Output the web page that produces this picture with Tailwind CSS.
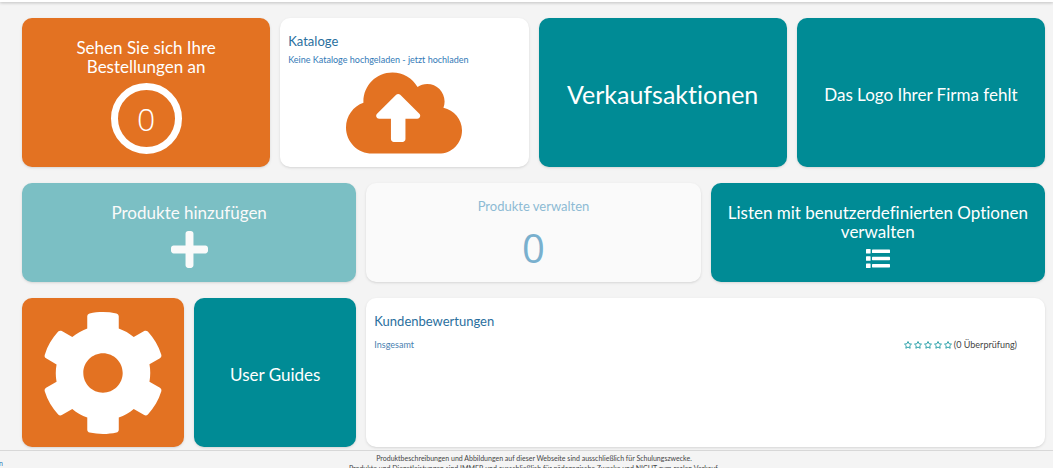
<!DOCTYPE html>
<html lang="de">
<head>
    <meta charset="utf-8">
    <meta name="viewport" content="width=device-width, initial-scale=1">
    <title>Dashboard</title>
    <script src="https://cdn.jsdelivr.net/npm/@tailwindcss/browser@4"></script>
</head>
<body class="bg-[#f4f4f4] font-['Lato',sans-serif] [font-variant-ligatures:none] text-[9px] text-[#444] h-screen overflow-hidden">
    <header class="h-[2px] bg-white shadow-[0_1px_3px_rgba(0,0,0,0.25)]"></header>

    <main class="grid grid-cols-12 gap-x-[10px] gap-y-4 pt-4 pl-[22px] pr-2 pb-[3px]">
        <!-- Row 1 -->
        <a href="#" class="col-span-3 min-h-[149px] rounded-[10px] bg-[#e37222] text-white shadow-sm flex flex-col items-center pt-5">
            <h2 class="text-[17px] leading-[19px] text-center w-[160px]">Sehen Sie sich Ihre Bestellungen an</h2>
            <span class="mt-[7px] size-[71px] rounded-full border-[7px] border-white flex items-center justify-center font-['Open_Sans',sans-serif] text-[32px] font-light">0</span>
        </a>
        <section class="col-span-3 min-h-[149px] rounded-[10px] bg-white shadow-sm px-2 pt-[15px] text-[#337ab7]">
            <h2 class="text-[13px] leading-4 text-[#2a6f9e]">Kataloge</h2>
            <a href="#" class="block mt-[5px] leading-3">
                Keine Kataloge hochgeladen - jetzt hochladen
                <svg class="mx-auto mt-[6px] w-[116px] h-[82px] fill-[#e37222]" viewBox="0 32 640 448"><path d="M537.6 226.6c4.1-10.7 6.4-22.4 6.4-34.6 0-53-43-96-96-96-19.7 0-38.1 6-53.3 16.2C367 64.2 315.3 32 256 32c-88.4 0-160 71.6-160 160 0 2.7.1 5.4.2 8.1C40.2 219.8 0 273.2 0 336c0 79.5 64.5 144 144 144h368c70.7 0 128-57.3 128-128 0-61.9-44-113.6-102.4-125.4zM393.4 288H328v112c0 8.8-7.2 16-16 16h-48c-8.8 0-16-7.2-16-16V288h-65.4c-14.3 0-21.4-17.2-11.3-27.3l105.4-105.4c6.2-6.2 16.4-6.2 22.6 0l105.4 105.4c10.1 10.1 2.9 27.3-11.3 27.3z"/></svg>
            </a>
        </section>
        <a href="#" class="col-span-3 min-h-[149px] rounded-[10px] bg-[#008b95] text-white shadow-sm flex items-center justify-center pt-1">
            <h2 class="text-[25px]">Verkaufsaktionen</h2>
        </a>
        <a href="#" class="col-span-3 min-h-[149px] rounded-[10px] bg-[#008b95] text-white shadow-sm flex items-center justify-center pt-1">
            <h2 class="text-[17px]">Das Logo Ihrer Firma fehlt</h2>
        </a>

        <!-- Row 2 -->
        <a href="#" class="col-span-4 min-h-[99px] rounded-[10px] bg-[#7bbfc4] text-[#fafafa] shadow-sm flex flex-col items-center pt-5">
            <h2 class="text-[17px] leading-[19px]">Produkte hinzufügen</h2>
            <svg class="mt-[9px] size-[37px] fill-current" viewBox="0 32 448 448"><path d="M416 208H272V64c0-17.67-14.33-32-32-32h-32c-17.67 0-32 14.33-32 32v144H32c-17.67 0-32 14.33-32 32v32c0 17.67 14.33 32 32 32h144v144c0 17.67 14.33 32 32 32h32c17.67 0 32-14.33 32-32V304h144c17.67 0 32-14.33 32-32v-32c0-17.67-14.33-32-32-32z"/></svg>
        </a>
        <a href="#" class="col-span-4 min-h-[99px] rounded-[10px] bg-[#fafafa] text-[#79b0ce] shadow-sm flex flex-col items-center pt-[15px]">
            <h2 class="text-[13px] leading-4 text-[#8dbad4]">Produkte verwalten</h2>
            <span class="mt-[11px] font-['Open_Sans',sans-serif] text-[40px] leading-[46px]">0</span>
        </a>
        <a href="#" class="col-span-4 min-h-[99px] rounded-[10px] bg-[#008b95] text-white shadow-sm flex flex-col items-center pt-5">
            <h2 class="text-[17px] leading-[19px] text-center px-4">Listen mit benutzerdefinierten Optionen verwalten</h2>
            <svg class="mt-2 w-6 h-[19px] fill-current" viewBox="0 0 24 19">
                <rect x="0" y="0" width="4.600" height="4.600" rx="0.6"/><rect x="6" y="0.600" width="18" height="3.400" rx="0.6"/>
                <rect x="0" y="7.200" width="4.600" height="4.600" rx="0.6"/><rect x="6" y="7.800" width="18" height="3.400" rx="0.6"/>
                <rect x="0" y="14.400" width="4.600" height="4.600" rx="0.6"/><rect x="6" y="15" width="18" height="3.400" rx="0.6"/>
            </svg>
        </a>

        <!-- Row 3 -->
        <a href="#" aria-label="Einstellungen" class="col-span-2 min-h-[149px] rounded-[10px] bg-[#e37222] text-white shadow-sm flex items-center justify-center">
            <svg class="size-[126px] fill-current" viewBox="0 0 512 512"><path d="M487.4 315.7l-42.6-24.6c4.3-23.2 4.3-47 0-70.2l42.6-24.6c4.9-2.8 7.1-8.6 5.5-14-11.1-35.6-30-67.8-54.7-94.6-3.8-4.1-10-5.1-14.8-2.3L380.8 110c-17.9-15.4-38.5-27.3-60.8-35.1V25.8c0-5.6-3.9-10.5-9.4-11.7-36.7-8.2-74.3-7.8-109.2 0-5.5 1.2-9.4 6.1-9.4 11.7V75c-22.2 7.9-42.8 19.8-60.8 35.1L88.7 85.5c-4.9-2.8-11-1.9-14.8 2.3-24.7 26.7-43.6 58.9-54.7 94.6-1.7 5.4.6 11.2 5.5 14L67.3 221c-4.3 23.2-4.3 47 0 70.2l-42.6 24.6c-4.9 2.8-7.1 8.6-5.5 14 11.1 35.6 30 67.8 54.7 94.6 3.8 4.1 10 5.1 14.8 2.3l42.6-24.6c17.9 15.4 38.5 27.3 60.8 35.1v49.2c0 5.6 3.9 10.5 9.4 11.7 36.7 8.2 74.3 7.8 109.2 0 5.5-1.2 9.4-6.1 9.4-11.7v-49.2c22.2-7.9 42.8-19.8 60.8-35.1l42.6 24.6c4.9 2.8 11 1.9 14.8-2.3 24.7-26.7 43.6-58.9 54.7-94.6 1.5-5.5-.7-11.3-5.6-14.1zM256 336c-44.1 0-80-35.9-80-80s35.9-80 80-80 80 35.9 80 80-35.9 80-80 80z"/></svg>
        </a>
        <a href="#" class="col-span-2 min-h-[149px] rounded-[10px] bg-[#008b95] text-white shadow-sm flex items-center justify-center pt-1">
            <h2 class="text-[17px]">User Guides</h2>
        </a>
        <section class="col-span-8 min-h-[149px] rounded-[10px] bg-white shadow-sm pl-2 pr-7 pt-[15px]">
            <h2 class="text-[13px] leading-4 text-[#2a6f9e]">Kundenbewertungen</h2>
            <div class="mt-[10px] flex justify-between items-center leading-3">
                <a href="#" class="text-[#4a7fb0]">Insgesamt</a>
                <div class="flex items-center gap-[2px]">
                    <svg class="size-2 fill-none stroke-[#1a9aa3]" viewBox="0 0 16 16" stroke-width="1.8" stroke-linejoin="round"><path d="M8 1l2.1 4.5 4.9.7-3.500 3.400.8 4.900L8 12.200l-4.300 2.300.8-4.900L1 6.200l4.900-.7z"/></svg>
                    <svg class="size-2 fill-none stroke-[#1a9aa3]" viewBox="0 0 16 16" stroke-width="1.8" stroke-linejoin="round"><path d="M8 1l2.1 4.5 4.9.7-3.500 3.400.8 4.900L8 12.200l-4.300 2.300.8-4.900L1 6.200l4.900-.7z"/></svg>
                    <svg class="size-2 fill-none stroke-[#1a9aa3]" viewBox="0 0 16 16" stroke-width="1.8" stroke-linejoin="round"><path d="M8 1l2.1 4.5 4.9.7-3.500 3.400.8 4.900L8 12.200l-4.300 2.300.8-4.900L1 6.200l4.900-.7z"/></svg>
                    <svg class="size-2 fill-none stroke-[#1a9aa3]" viewBox="0 0 16 16" stroke-width="1.8" stroke-linejoin="round"><path d="M8 1l2.1 4.5 4.9.7-3.500 3.400.8 4.900L8 12.200l-4.300 2.300.8-4.900L1 6.200l4.900-.7z"/></svg>
                    <svg class="size-2 fill-none stroke-[#1a9aa3]" viewBox="0 0 16 16" stroke-width="1.8" stroke-linejoin="round"><path d="M8 1l2.1 4.5 4.9.7-3.500 3.400.8 4.900L8 12.200l-4.300 2.300.8-4.900L1 6.200l4.900-.7z"/></svg>
                    <span>(0 Überprüfung)</span>
                </div>
            </div>
        </section>
    </main>

    <footer class="border-t border-[#d8d8d8] flex text-[7px] leading-[10px] pt-[2px]">
        <a href="#" class="w-[3px] pt-[5px] flex justify-end overflow-hidden text-[#337ab7]">n</a>
        <p class="flex-1 text-center pl-3">Produktbeschreibungen und Abbildungen auf dieser Webseite sind ausschließlich für Schulungszwecke.<br>
        Produkte und Dienstleistungen sind IMMER und ausschließlich für pädagogische Zwecke und NICHT zum realen Verkauf.</p>
    </footer>
</body>
</html>
